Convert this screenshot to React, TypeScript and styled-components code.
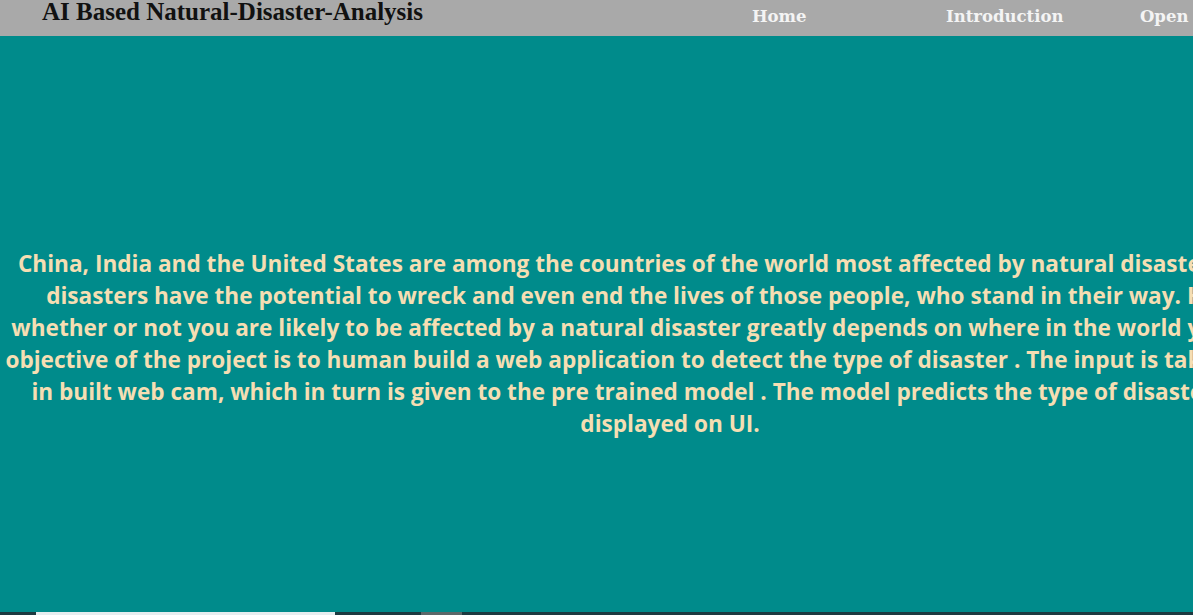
import React from "react";
import styled, { createGlobalStyle } from "styled-components";

const Global = createGlobalStyle`
  html, body { margin: 0; padding: 0; overflow: hidden; }
  body { background: #008b8b; width: 1193px; height: 615px; }
  #root { width: 1193px; height: 615px; overflow: hidden; }
`;

const Page = styled.div`
  display: flex;
  flex-direction: column;
  width: 1193px;
  height: 615px;
  overflow: hidden;
`;

const Header = styled.header`
  flex: 0 0 36px;
  display: flex;
  align-items: flex-start;
  background: #a9a9a9;
  white-space: nowrap;
  overflow: hidden;
`;

const Title = styled.h1`
  margin: 0;
  padding: 0 0 0 42px;
  width: 710px;
  flex: 0 0 auto;
  font-family: "Liberation Serif", "Times New Roman", serif;
  font-weight: 700;
  font-size: 25px;
  line-height: 23px;
  color: #111;
`;

const Nav = styled.nav`
  display: flex;
  flex: 0 0 auto;
  padding-top: 6px;
`;

const NavLink = styled.a`
  flex: 0 0 194px;
  font-family: "DejaVu Serif", Cambria, serif;
  font-weight: 700;
  font-size: 16.5px;
  line-height: 22px;
  color: #f4f4f4;
  text-decoration: none;
`;

const Main = styled.main`
  flex: 1 1 auto;
  background: #008b8b;
  padding-top: 212px;
  overflow: hidden;
`;

const Intro = styled.p`
  margin: 0 0 0 -62px;
  width: 1464px;
  text-align: center;
  white-space: nowrap;
  font-family: "Open Sans", "Noto Sans", sans-serif;
  font-weight: 700;
  font-size: 22.6px;
  line-height: 32px;
  color: #f5deb3;
`;

const Strip = styled.div`
  flex: 0 0 3px;
  display: flex;
  background: #1d3a40;
`;

const Segment = styled.div<{ $w: number; $c: string }>`
  flex: 0 0 ${(p) => p.$w}px;
  background: ${(p) => p.$c};
`;

export default function App() {
  return (
    <Page>
      <Global />
      <Header>
        <Title>AI Based Natural-Disaster-Analysis</Title>
        <Nav>
          <NavLink href="#">Home</NavLink>
          <NavLink href="#">Introduction</NavLink>
          <NavLink href="#">Open</NavLink>
        </Nav>
      </Header>
      <Main>
        <Intro>
          China, India and the United States are among the countries of the world most affected by natural disasters. Natural
          <br />
          disasters have the potential to wreck and even end the lives of those people, who stand in their way. However,
          <br />
          whether or not you are likely to be affected by a natural disaster greatly depends on where in the world you live. The
          <br />
          objective of the project is to human build a web application to detect the type of disaster . The input is taken from the
          <br />
          in built web cam, which in turn is given to the pre trained model . The model predicts the type of disaster and it is
          <br />
          displayed on UI.
        </Intro>
      </Main>
      <Strip>
        <Segment $w={36} $c="#1d3a40" />
        <Segment $w={299} $c="#e6edef" />
        <Segment $w={86} $c="#1d3a40" />
        <Segment $w={41} $c="#5b6869" />
      </Strip>
    </Page>
  );
}
